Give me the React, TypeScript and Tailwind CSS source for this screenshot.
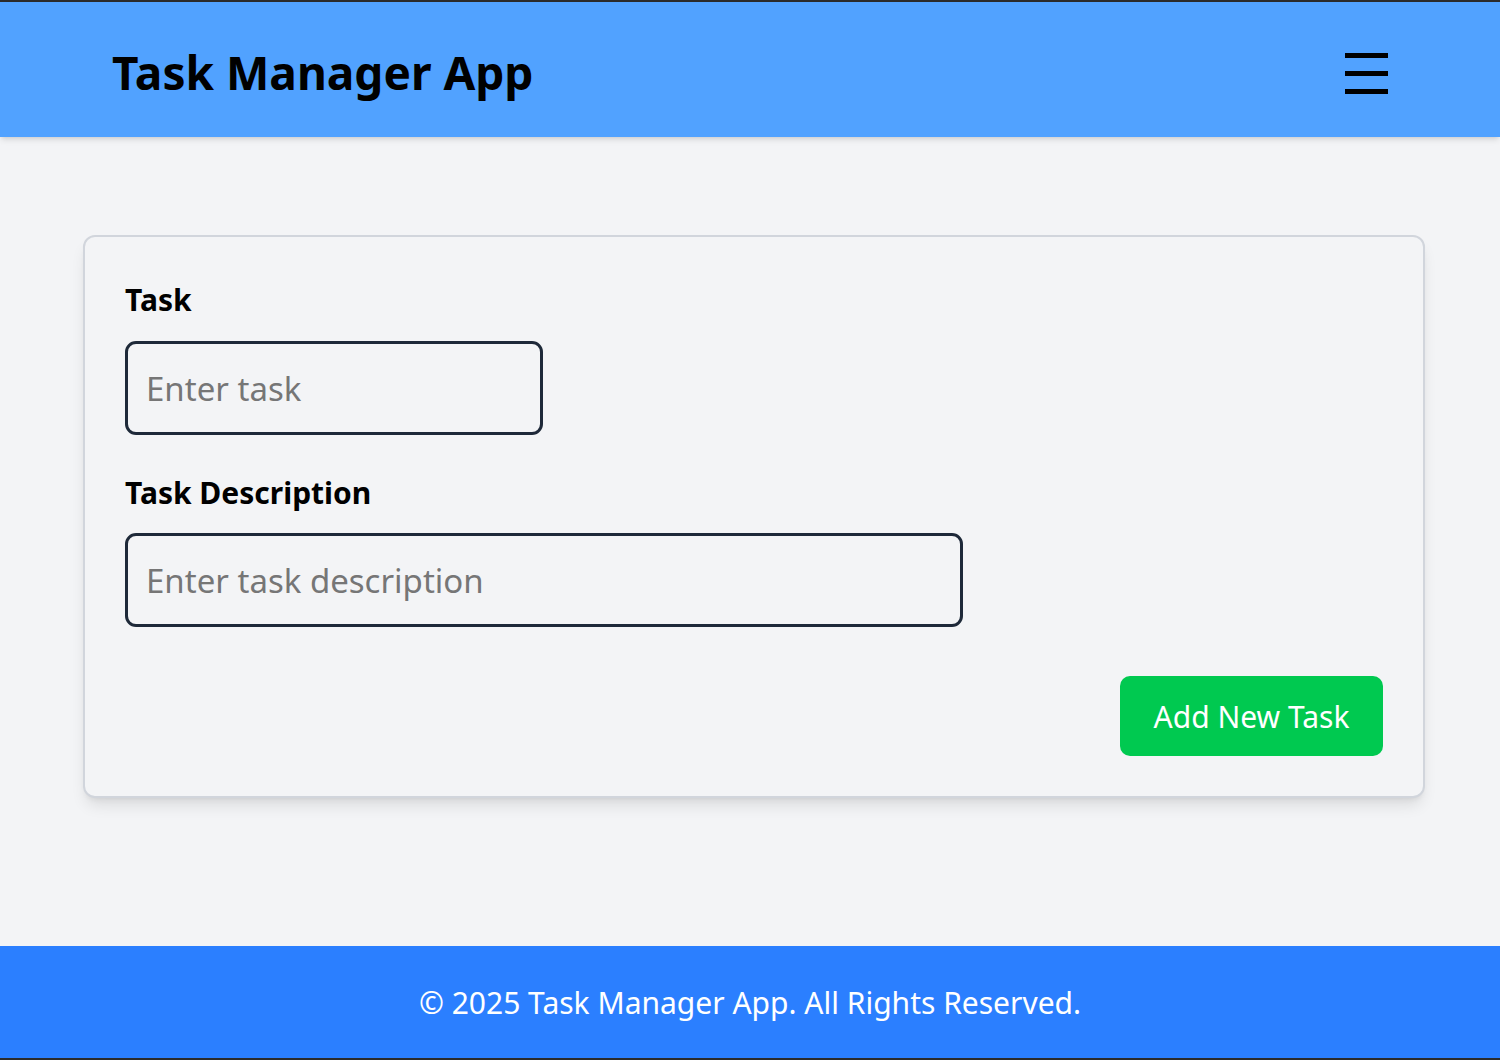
import React, {FC} from 'react';

const font = {fontFamily: '"Noto Sans", "Open Sans", sans-serif'};

const Header: FC = () => (
    <header className="header h-[135px] flex items-center justify-between px-28 bg-[#51a2ff] shadow-md relative z-10">
      <h1 className="header__title text-[46px] font-bold text-black leading-none mt-1">Task Manager App</h1>
      <button className="header__menu flex flex-col gap-[13px] mt-2" aria-label="menu">
        <span className="block w-[43px] h-[5px] bg-black"/>
        <span className="block w-[43px] h-[5px] bg-black"/>
        <span className="block w-[43px] h-[5px] bg-black"/>
      </button>
    </header>
);

const TaskForm: FC = () => (
    <form className="task-form ml-[83px] w-[1342px] p-10 border-2 border-gray-300 rounded-xl bg-gray-100 shadow-lg">
      <label className="task-form__label block text-[30px] leading-9 font-bold text-black mt-[5px] mb-[23px]"
             htmlFor="task">
        Task
      </label>
      <input
          id="task"
          className="task-form__input block w-[418px] h-[94px] px-[18px] border-[3px] border-gray-800 rounded-[11px] text-[33px] bg-transparent placeholder:text-[#767676] outline-none"
          placeholder="Enter task"
      />
      <label className="task-form__label block text-[30px] leading-9 font-bold text-black mt-10 mb-[22px]"
             htmlFor="description">
        Task Description
      </label>
      <input
          id="description"
          className="task-form__input block w-[838px] h-[94px] px-[18px] border-[3px] border-gray-800 rounded-[11px] text-[33px] bg-transparent placeholder:text-[#767676] outline-none"
          placeholder="Enter task description"
      />
      <div className="task-form__actions flex justify-end mt-[49px]">
        <button type="button"
                className="task-form__submit h-20 w-[263px] rounded-[10px] bg-[#00c950] text-white text-[30px]">
          Add New Task
        </button>
      </div>
    </form>
);

const App: FC = () => {
  return (
      <div className="app h-[1060px] flex flex-col border-y-2 border-[#2b2b2b] bg-gray-100" style={font}>
        <Header/>
        <main className="main flex-1 pt-[98px]">
          <TaskForm/>
        </main>
        <footer className="footer h-[112px] flex items-center justify-center bg-[#2b7fff] text-white text-[30px]">
          © 2025 Task Manager App. All Rights Reserved.
        </footer>
      </div>
  );
}

export default App;
